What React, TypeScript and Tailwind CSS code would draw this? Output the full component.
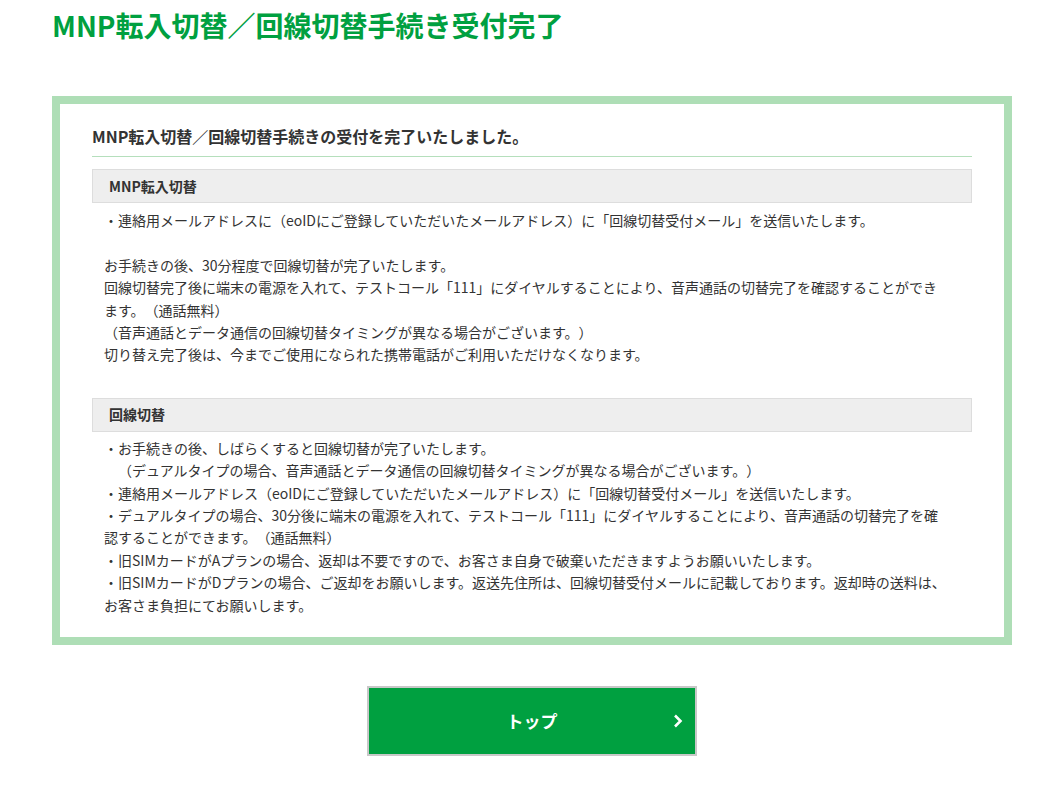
import React from "react";

const font = { fontFamily: '"Noto Sans CJK JP", "Noto Sans", sans-serif' };

function SectionHeader({ children }: { children: React.ReactNode }) {
  return (
    <div className="h-[34px] flex items-center bg-[#eeeeee] border border-[#dddddd] pl-[16px] text-[14px] font-bold text-[#333333]">
      {children}
    </div>
  );
}

export default function App() {
  return (
    <div className="bg-white min-h-[810px] text-[#333333] [text-spacing-trim:space-all]" style={font}>
      <div className="w-[960px] mx-auto pt-[4px] pb-[50px]">
        <h1 className="text-[28px] leading-[42px] font-bold text-[#00a040]">
          MNP転入切替／回線切替手続き受付完了
        </h1>

        <div className="mt-[50px] border-[8px] border-[#aedeb6] px-[32px] pt-[20px] pb-[21px]">
          <h2 className="text-[16px] leading-[24px] font-bold text-[#333333] pb-[8px] border-b border-[#b5dfbc]">
            MNP転入切替／回線切替手続きの受付を完了いたしました。
          </h2>

          <div className="mt-[12px]">
            <SectionHeader>MNP転入切替</SectionHeader>
            <div className="pl-[12px] pr-[24px] pt-[6px] text-[14px] leading-[22.4px] pb-[32px]">
              <p>・連絡用メールアドレスに（eoIDにご登録していただいたメールアドレス）に「回線切替受付メール」を送信いたします。</p>
              <p className="mt-[22.4px]">お手続きの後、30分程度で回線切替が完了いたします。</p>
              <p>回線切替完了後に端末の電源を入れて、テストコール「111」にダイヤルすることにより、音声通話の切替完了を確認することができます。（通話無料）</p>
              <p>（音声通話とデータ通信の回線切替タイミングが異なる場合がございます。）</p>
              <p>切り替え完了後は、今までご使用になられた携帯電話がご利用いただけなくなります。</p>
            </div>
          </div>

          <div>
            <SectionHeader>回線切替</SectionHeader>
            <div className="pl-[12px] pr-[24px] pt-[5px] text-[14px] leading-[22.4px]">
              <p>・お手続きの後、しばらくすると回線切替が完了いたします。</p>
              <p>　（デュアルタイプの場合、音声通話とデータ通信の回線切替タイミングが異なる場合がございます。）</p>
              <p>・連絡用メールアドレス（eoIDにご登録していただいたメールアドレス）に「回線切替受付メール」を送信いたします。</p>
              <p>・デュアルタイプの場合、30分後に端末の電源を入れて、テストコール「111」にダイヤルすることにより、音声通話の切替完了を確認することができます。（通話無料）</p>
              <p>・旧SIMカードがAプランの場合、返却は不要ですので、お客さま自身で破棄いただきますようお願いいたします。</p>
              <p>・旧SIMカードがDプランの場合、ご返却をお願いします。返送先住所は、回線切替受付メールに記載しております。返却時の送料は、お客さま負担にてお願いします。</p>
            </div>
          </div>
        </div>

        <div className="mt-[41px] flex justify-center">
          <a
            href="#"
            className="relative w-[330px] h-[70px] flex items-center justify-center bg-[#00a040] border-2 border-[#c8c8c8] text-white text-[17px] font-bold"
          >
            トップ
            <svg
              className="absolute right-[12px] top-1/2 -translate-y-1/2"
              width="10"
              height="14"
              viewBox="0 0 10 14"
              fill="none"
            >
              <path d="M2 1.5 L7.5 7 L2 12.5" stroke="white" strokeWidth="2.6" />
            </svg>
          </a>
        </div>
      </div>
    </div>
  );
}
